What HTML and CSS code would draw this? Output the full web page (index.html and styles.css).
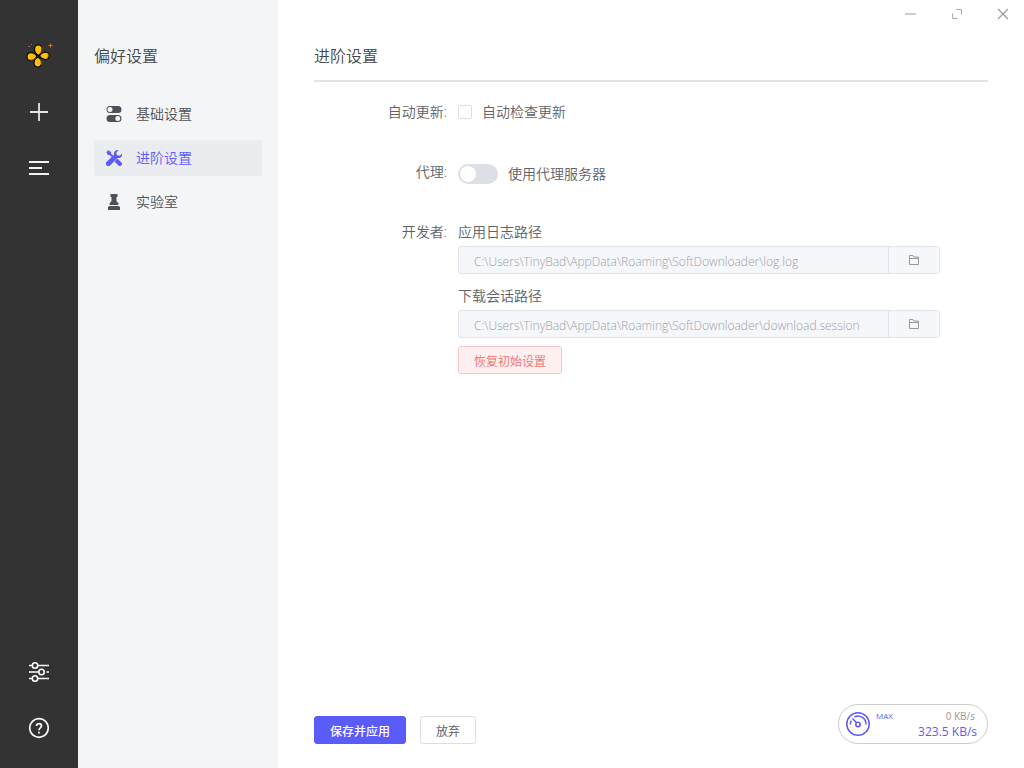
FILE: index.html
```html
<!DOCTYPE html>
<html lang="zh-CN">
<head>
<meta charset="utf-8">
<title>进阶设置</title>
<link rel="stylesheet" href="styles.css">
</head>
<body>
<div class="app">
  <aside class="rail">
    <div class="rail-group">
      <svg class="logo" viewBox="0 0 36 34" width="36" height="34" aria-hidden="true">
        <g fill="#ffc107" stroke="#080808" stroke-width="1.200">
          <path d="M17.500 17.500C12 14 12.500 7.500 17 7C22 6.500 22.500 14 17.500 17.500Z"/>
          <path d="M17 19C11.500 22 12 28.500 16.500 29C21.500 29.300 22 22 17 19Z"/>
          <path d="M16 18C13 23.500 6.500 24 6 19.500C5.500 14 12 12.500 16 18Z"/>
          <path d="M18.500 18C22 23 28 22.500 28 18C28 13 21.500 13 18.500 18Z"/>
        </g>
        <path d="M20 8.500c2 2 1 5-.5 7M26.500 15c1.500 2 1 4-1 5.500M20 27c1-2 1-4-.5-6M9 22c2 .5 4-.5 6-2" fill="none" stroke="#a56a00" stroke-width=".8"/>
        <path d="M29.500 5.500v4M27.500 7.500h4" stroke="#d9741f" stroke-width="1"/>
        <path d="M7.500 8.500h1.500M10 6.500h1" stroke="#e8650a" stroke-width="1.200"/>
      </svg>
      <button class="rail-button" aria-label="新建任务"><svg viewBox="0 0 24 24" width="24" height="24"><path d="M12 3v18M3 12h18" stroke="#e6e6e6" stroke-width="1.800"/></svg></button>
      <button class="rail-button" aria-label="任务列表"><svg viewBox="0 0 24 24" width="24" height="24"><path d="M2 6h20M2 12h13M2 18h20" stroke="#f2f2f2" stroke-width="1.800"/></svg></button>
    </div>
    <div class="rail-group">
      <button class="rail-button" aria-label="偏好设置"><svg viewBox="0 0 24 24" width="24" height="24"><g fill="none" stroke="#fff" stroke-width="1.600"><path d="M2 5.500h3M11 5.500h11M2 12h9.500M19.500 12h2.500M2 18.500h3M11 18.500h11"/><circle cx="8" cy="5.500" r="2.700"/><circle cx="14.500" cy="12" r="2.700"/><circle cx="8" cy="18.500" r="2.700"/></g></svg></button>
      <button class="rail-button" aria-label="帮助"><svg viewBox="0 0 24 24" width="24" height="24"><g fill="none" stroke="#fff" stroke-width="1.700"><circle cx="12" cy="12" r="9.300"/><path d="M9.500 10c0-3.300 5-3.300 5 0 0 2-2.500 1.800-2.500 4.200M12 15.800v1.800"/></g></svg></button>
    </div>
  </aside>
  <nav class="subnav">
    <h2 class="title">偏好设置</h2>
    <a class="nav-item" href="#basic"><svg viewBox="0 0 16 16" width="16" height="16"><path fill="currentColor" fill-rule="evenodd" d="M4 0h8a3.500 3.500 0 0 1 0 7H4a3.500 3.500 0 0 1 0-7zm0 1a2.500 2.500 0 1 0 0 5 2.500 2.500 0 0 0 0-5zM4 9h8a3.500 3.500 0 0 1 0 7H4a3.500 3.500 0 0 1 0-7zm7.800 1a2.500 2.500 0 1 0 0 5 2.500 2.500 0 0 0 0-5z"/></svg>基础设置</a>
    <a class="nav-item nav-item-active" href="#advanced"><svg viewBox="0 0 16 16" width="16" height="16"><g fill="currentColor"><path d="M.3 2.200 2.200.3l2.800 1.700v1.500l3 3-1.400 1.400-3-3H2z"/><path d="M15.800 3.700 13.500 5.800l-2.600-.6-.6-2.500L12.400.2C10 -.5 7.400 1.800 8.100 4.700L.7 11.800a2.300 2.300 0 0 0 0 3.500 2.300 2.300 0 0 0 3.500 0l7.200-7.400c2.800.8 5.400-1.700 4.400-4.200z"/><path d="m11.400 8.600 4 3.900c1.900 1.900-1 4.800-2.900 2.900l-4-4z"/></g></svg>进阶设置</a>
    <a class="nav-item" href="#lab"><svg viewBox="0 0 16 16" width="16" height="16"><path fill="currentColor" d="M4.500 0h7v3h-1v4l2 2.500V11h-9V9.500l2-2.500V3h-1zM3.500 12h9a1.500 1.500 0 0 1 1.500 1.500V16H2v-2.500A1.500 1.500 0 0 1 3.500 12z"/></svg>实验室</a>
  </nav>
  <main class="main">
    <div class="window-controls">
      <button aria-label="最小化"><svg viewBox="0 0 12 12" width="12" height="12"><path d="M0 6h11" stroke="#ccc" stroke-width="2"/></svg></button>
      <button aria-label="最大化"><svg viewBox="0 0 12 12" width="12" height="12"><path d="M5.500 1.500h5v5M1.500 5.500v5h5" fill="none" stroke="#aaa"/></svg></button>
      <button aria-label="关闭"><svg viewBox="0 0 12 12" width="12" height="12"><path d="M1 1l10 10M11 1L1 11" stroke="#999" stroke-width="1.100"/></svg></button>
    </div>
    <h1 class="title main-title">进阶设置</h1>
    <form class="form" id="settings">
      <div class="row">
        <span class="row-label">自动更新:</span>
        <label class="check"><input type="checkbox">自动检查更新</label>
      </div>
      <div class="row">
        <span class="row-label">代理:</span>
        <label class="switch"><input type="checkbox" role="switch">使用代理服务器</label>
      </div>
      <div class="row">
        <span class="row-label">开发者:</span>
        <div class="row-content">
          <label class="path-label" for="log-path">应用日志路径</label>
          <div class="path">
            <input id="log-path" type="text" disabled value="C:\Users\TinyBad\AppData\Roaming\SoftDownloader\log.log">
            <button type="button" aria-label="打开日志文件夹"><svg viewBox="0 0 12 12" width="12" height="12"><path d="M1.500 10.500v-9h3.500l1 1.500h4.500v7.500zM1.500 4.500h9" fill="none" stroke="#999"/></svg></button>
          </div>
          <label class="path-label" for="session-path">下载会话路径</label>
          <div class="path">
            <input id="session-path" type="text" disabled value="C:\Users\TinyBad\AppData\Roaming\SoftDownloader\download.session">
            <button type="button" aria-label="打开会话文件夹"><svg viewBox="0 0 12 12" width="12" height="12"><path d="M1.500 10.500v-9h3.500l1 1.500h4.500v7.500zM1.500 4.500h9" fill="none" stroke="#999"/></svg></button>
          </div>
          <button class="button button-danger" type="reset">恢复初始设置</button>
        </div>
      </div>
    </form>
    <footer class="footer">
      <button class="button button-primary" type="submit" form="settings">保存并应用</button>
      <button class="button" type="button">放弃</button>
      <div class="speed">
        <svg viewBox="0 0 24 24" width="24" height="24"><g fill="none" stroke="#5b5bfa" stroke-width="1.500"><circle cx="12" cy="12" r="11.200"/><circle cx="12" cy="12.500" r="2.200"/><path d="M10.500 10.800 6.500 6.500M8.500 5a8 8 0 0 1 11.500 7.500M4.300 12.500a8 8 0 0 1 1-4"/></g></svg>
        <span class="speed-mode">MAX</span>
        <div class="speed-values"><span class="speed-up">0 KB/s</span><span class="speed-down">323.5 KB/s</span></div>
      </div>
    </footer>
  </main>
</div>
</body>
</html>
```
FILE: styles.css
```css
* { box-sizing: border-box; }
body {
  margin: 0;
  font-family: "Open Sans", "Noto Sans CJK SC", sans-serif;
  font-size: 14px;
  color: #606266;
  background: #fff;
}
button, input { font: inherit; color: inherit; margin: 0; }
button { padding: 0; border: 0; background: none; cursor: pointer; }
svg { display: block; flex: none; }
.app { display: flex; min-height: 100vh; }
.rail {
  width: 78px;
  flex: none;
  display: flex;
  flex-direction: column;
  justify-content: space-between;
  padding: 38px 0 28px;
  background: #333;
}
.rail-group { display: flex; flex-direction: column; align-items: center; gap: 32px; }
.rail-group .logo { margin-bottom: -4px; }
.subnav {
  width: 200px;
  flex: none;
  display: flex;
  flex-direction: column;
  gap: 8px;
  padding: 44px 16px;
  background: #f4f5f7;
}
.title {
  margin: 0;
  font-size: 16px;
  line-height: 24px;
  font-weight: 350;
  color: #45474a;
}
.subnav .title { margin-bottom: 20px; }
.nav-item {
  display: flex;
  align-items: center;
  gap: 14px;
  height: 36px;
  padding: 0 12px;
  border-radius: 3px;
  color: #4d515a;
  font-weight: 350;
  line-height: 20px;
  text-decoration: none;
}
.nav-item-active { color: #5b5bfa; background: #eaecf0; }
.main { flex: 1; min-width: 0; display: flex; flex-direction: column; padding: 8px 36px 24px; }
.window-controls { display: flex; justify-content: flex-end; gap: 34px; margin-right: -21px; }
.main-title { margin-top: 24px; padding-bottom: 12px; border-bottom: 2px solid #e4e4e4; }
.form { flex: 1; padding-top: 10px; font-weight: 350; }
.row { display: flex; margin-bottom: 20px; line-height: 40px; }
.row-label { width: 144px; flex: none; padding-right: 11px; text-align: right; }
.row-content { flex: 1; max-width: 482px; }
.check, .switch { display: flex; align-items: center; gap: 10px; height: 40px; line-height: 20px; }
.check input {
  appearance: none;
  width: 14px;
  height: 14px;
  border: 1px solid #dcdfe6;
  border-radius: 2px;
  background: #fff;
}
.switch { padding-top: 4px; }
.switch input {
  appearance: none;
  width: 40px;
  height: 20px;
  padding: 2px;
  border-radius: 10px;
  background: #dcdfe6;
}
.switch input::before {
  content: "";
  display: block;
  width: 16px;
  height: 16px;
  border-radius: 50%;
  background: #fff;
}
.switch input:checked { background: #5b5bfa; }
.switch input:checked::before { margin-left: auto; }
.path-label { display: block; line-height: 28px; padding-top: 6px; }
.path { display: flex; height: 28px; margin-bottom: 2px; font-size: 12px; border: 1px solid #e0e3ea; border-radius: 3px; background: #f5f7fa; }
.path input {
  flex: 1;
  min-width: 0;
  padding: 3px 15px 0;
  border: 0;
  background: none;
  color: #9da1ab;
  font-weight: 300;
}
.path button { width: 51px; border-left: 1px solid #e0e3ea; display: grid; place-items: center; }
.button {
  height: 28px;
  padding: 3px 15px 0;
  border: 1px solid #dcdfe6;
  border-radius: 3px;
  background: #fff;
  color: #606266;
  font-size: 12px;
  line-height: 23px;
}
.button-primary { border-color: #5b5bfa; background: #5b5bfa; color: #fff; font-weight: 500; }
.button-danger { display: block; margin-top: 8px; border-color: #fbc4c4; background: #fef0f0; color: #f56c6c; }
.footer { display: flex; align-items: flex-end; gap: 14px; }
.speed {
  display: flex;
  align-items: center;
  width: 150px;
  height: 40px;
  margin-left: auto;
  padding: 0 10px 0 7px;
  border: 1px solid #ccc;
  border-radius: 20px;
}
.speed-mode { align-self: flex-start; margin-left: 6px; padding-top: 5px; font-size: 8px; line-height: 12px; color: #5b5bfa; }
.speed-values { margin-left: auto; display: flex; flex-direction: column; align-items: flex-end; }
.speed-up { padding-right: 2px; font-size: 10px; line-height: 14px; color: #999; }
.speed-down { font-size: 12px; line-height: 17px; color: #5b5bfa; }
```
